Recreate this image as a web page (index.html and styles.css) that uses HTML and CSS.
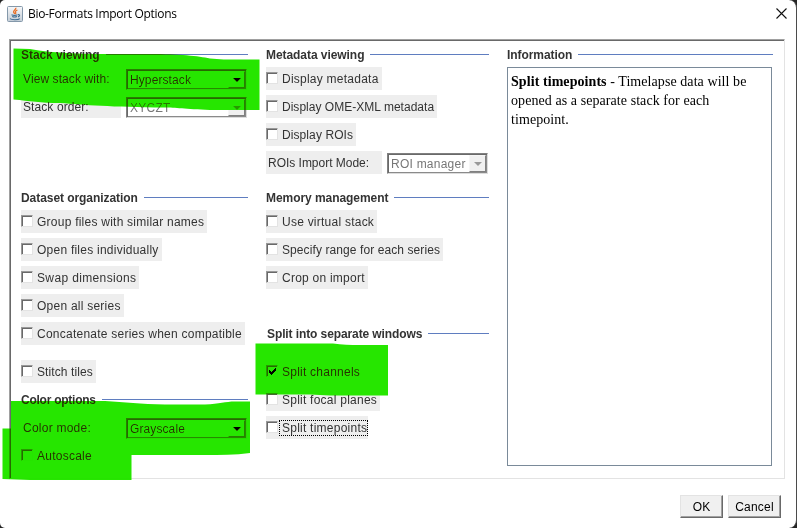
FILE: index.html
```html
<!DOCTYPE html>
<html lang="en">
<head>
<meta charset="utf-8">
<title>Bio-Formats Import Options</title>
<link rel="stylesheet" href="styles.css">
</head>
<body>
<div class="window">
  <header class="titlebar">
    <svg class="java" viewBox="0 0 16 16" width="16" height="16">
      <defs><linearGradient id="tile" x2="0" y2="1"><stop offset="0" stop-color="#f7f8fa"/><stop offset="1" stop-color="#c3cdd6"/></linearGradient></defs>
      <rect x=".5" y=".5" width="15" height="15" rx="1" fill="url(#tile)" stroke="#8498aa"/>
      <path d="M8.8 1.8c.7 1.8-2.7 2.5-2.2 4.2.2.8 1 1.2 1 2M10.4 4.2c-1.500.5-2.400 1.200-1.800 2.100.5.8.1 1.300-.3 1.700" fill="none" stroke="#e8722a" stroke-width="1.300"/>
      <path d="M4.500 8.800c1.500.6 4.500.6 6 0M5.200 10.500c1.200.5 3.500.5 4.800 0M11 8.700c2-.6 2.300 1.500 0 2.200M3 12.700c1.500 1.400 8.500 1.300 9.800-.1" fill="none" stroke="#3f6c90" stroke-width="1.100"/>
    </svg>
    <h1>Bio-Formats Import Options</h1>
    <svg class="close" viewBox="0 0 11 11" width="11" height="11"><path d="M.5.5l10 10M10.500.5l-10 10" stroke="#111" stroke-width="1.100"/></svg>
  </header>

  <main class="pane">
    <div class="column">
      <section class="stack">
        <h2><span>Stack viewing</span></h2>
        <div class="row"><span class="label snug">View stack with:</span><span class="combo"><span class="value">Hyperstack</span><i class="arrow"></i></span></div>
        <div class="row"><span class="label snug">Stack order:</span><span class="combo disabled"><span class="value">XYCZT</span><i class="arrow"></i></span></div>
      </section>
      <section>
        <h2><span>Dataset organization</span></h2>
        <label class="check"><i class="box"></i><span class="t">Group files with similar names</span></label>
        <label class="check"><i class="box"></i><span class="t">Open files individually</span></label>
        <label class="check loose"><i class="box"></i><span class="t">Swap dimensions</span></label>
        <label class="check"><i class="box"></i><span class="t">Open all series</span></label>
        <label class="check"><i class="box"></i><span class="t">Concatenate series when compatible</span></label>
        <label class="check stitch snug"><i class="box"></i><span class="t">Stitch tiles</span></label>
      </section>
      <section class="color">
        <h2><span>Color options</span></h2>
        <div class="row"><span class="label">Color mode:</span><span class="combo"><span class="value">Grayscale</span><i class="arrow"></i></span></div>
        <label class="check"><i class="box"></i><span class="t">Autoscale</span></label>
      </section>
    </div>

    <div class="column">
      <section class="stack">
        <h2><span>Metadata viewing</span></h2>
        <label class="check"><i class="box"></i><span class="t">Display metadata</span></label>
        <label class="check ome"><i class="box"></i><span class="t">Display OME-XML metadata</span></label>
        <label class="check snug"><i class="box"></i><span class="t">Display ROIs</span></label>
        <div class="row roi"><span class="label">ROIs Import Mode:</span><span class="combo disabled"><span class="value">ROI manager</span><i class="arrow"></i></span></div>
      </section>
      <section class="memory">
        <h2><span>Memory management</span></h2>
        <label class="check"><i class="box"></i><span class="t">Use virtual stack</span></label>
        <label class="check snug"><i class="box"></i><span class="t">Specify range for each series</span></label>
        <label class="check"><i class="box"></i><span class="t">Crop on import</span></label>
      </section>
      <section class="split">
        <h2><span>Split into separate windows</span></h2>
        <label class="check"><i class="box"><svg viewBox="0 0 7 7" width="7" height="7" shape-rendering="crispEdges"><path d="M0 2h1v1h1v1h1v-1h1v-1h1v-1h1v-1h1v3h-1v1h-1v1h-1v1h-1v1h-1v-1h-1v-1h-1z"/></svg></i><span class="t">Split channels</span></label>
        <label class="check"><i class="box"></i><span class="t">Split focal planes</span></label>
        <label class="check focus"><i class="box"></i><span class="t">Split timepoints</span></label>
      </section>
    </div>

    <div class="column">
      <section class="info">
        <h2><span>Information</span></h2>
        <div class="text"><p><b>Split timepoints</b> - Timelapse data will be<br>opened as a separate stack for each<br>timepoint.</p></div>
      </section>
    </div>
  </main>

  <footer class="buttons"><button class="ok">OK</button><button>Cancel</button></footer>

  <svg class="marker" viewBox="0 0 797 528" width="797" height="528">
    <path d="M13.500 48.500L30 49C60 55 110 54 150 54C180 54 198 56 210 58.500C225 60 240 59.500 259.500 59.500V110H210C185 109 175 107.500 165 107.500C110 107 85 105 60 103C40 103 30 101 13.500 99.500Z"/>
    <path d="M11 401H105C125 402 140 404 165 404.500H205C220 404 225 401.500 235 401.500H250V453C235 455 220 455 205 455H131.500V480H30L2.500 479V428.500H11Z"/>
    <path d="M255.500 343.500H333C342 344.500 350 345 360 345H388V395.500H330L310 394.500H255.500Z"/>
  </svg>
</div>
</body>
</html>
```
FILE: styles.css
```css
* { box-sizing: border-box; }
body { margin: 0; background: #252525; }
.window {
  position: relative;
  width: 797px;
  height: 528px;
  background: #fff;
  border-right: 1px solid #4b4b4b;
  border-radius: 5px 8px 8px 5px;
  overflow: hidden;
  font: 12px/16px "Liberation Sans", Arial, sans-serif;
  letter-spacing: .24px;
  color: #333;
}
.titlebar { display: flex; align-items: center; height: 39px; padding: 0 9px 12px 7px; }
.titlebar h1 {
  flex: 1;
  margin: 0 0 0 5px;
  font: 12px/16px "Open Sans", "Noto Sans", sans-serif;
  letter-spacing: -.31px;
  color: #000;
}
svg { display: block; }
.pane {
  display: grid;
  grid-template-columns: 227px 223px 266px;
  column-gap: 18px;
  width: 776px;
  height: 440px;
  margin-left: 9px;
  padding: 6px 0 0 11px;
  border: 1px solid;
  border-color: #a0a0a0 #e3e3e3 #e3e3e3 #a0a0a0;
  box-shadow: inset 1px 1px #696969;
}
section { display: flex; flex-direction: column; align-items: flex-start; gap: 5px; }
.stack { height: 143px; }
.memory { height: 136px; }
h2 { display: flex; align-items: center; align-self: stretch; gap: 6px; height: 16px; margin: 0; font-size: 12px; line-height: 16px; letter-spacing: -.06px; }
h2 span { padding-top: 2px; }
h2::after { content: ""; flex: 1; height: 1px; background: #5f7dc0; }
.row { display: flex; width: 100%; height: 23px; }
.label { flex: none; width: 100px; height: 23px; padding: 4px 0 0 2px; background: #eee; white-space: nowrap; }
.combo {
  display: flex;
  flex: none;
  width: 121px;
  height: 21px;
  margin: 2px 0 0 5px;
  padding-left: 2px;
  border: 1px solid;
  border-color: #808080 #dcdcdc #dcdcdc #808080;
  box-shadow: inset 1px 1px #696969, inset -1px -1px #8a8a8a;
  white-space: nowrap;
}
.value { flex: 1; padding: 2px 0 0 1px; letter-spacing: .1px; }
.arrow { width: 17px; margin: 1px; background: #f0f0f0; border: 1px solid; border-color: #f6f6f6 #808080 #808080 #f6f6f6; display: flex; align-items: center; justify-content: center; }
.arrow::after { content: ""; border: 4px solid transparent; border-top-color: #000; border-bottom: 0; }
.disabled { color: #777; }
.disabled .value { letter-spacing: .24px; }
.disabled .arrow::after { border-top-color: #999; }
.roi .label { width: 116px; letter-spacing: -.02px; }
.roi .combo { width: 101px; }
.check { display: flex; align-items: center; height: 23px; padding-right: 3px; background: #eee; white-space: nowrap; }
.snug { letter-spacing: .09px; }
.ome { letter-spacing: .02px; }
.loose { letter-spacing: .36px; }
.box {
  width: 12px;
  height: 12px;
  margin-right: 4px;
  margin-top: -1px;
  padding: 2px 0 0 2px;
  background: #fff;
  border: 1px solid;
  border-color: #999 #e3e3e3 #e3e3e3 #999;
  box-shadow: inset 1px 1px #696969;
}
.stitch { margin-top: 10px; }
.color { margin-top: 8px; }
.color h2 { margin-bottom: 4px; letter-spacing: -.25px; }
.split h2 { margin-bottom: 14px; padding-left: 1px; letter-spacing: -.1px; }
.focus .t { height: 14px; margin: 1px -2px 0; padding-left: 2px; line-height: 14px; outline: 1px dotted #000; }
.text { align-self: stretch; width: 265px; height: 399px; border: 1px solid #7a8a99; padding: 4px 3px; }
.text p { margin: 0; font: 14px/19px "Liberation Serif", "Times New Roman", serif; letter-spacing: .07px; color: #000; white-space: nowrap; }
.buttons { display: flex; justify-content: flex-end; gap: 5px; padding: 16px 15px 0 0; }
button { width: 53px; height: 23px; padding: 0; font: 12px "Liberation Sans", sans-serif; letter-spacing: .2px; background: #f0f0f0; color: #000; border: 1px solid; border-color: #e3e3e3 #696969 #696969 #e3e3e3; box-shadow: inset -1px -1px #a0a0a0; }
.ok { width: 43px; }
.marker { position: absolute; left: 0; top: 0; mix-blend-mode: darken; fill: #26e600; pointer-events: none; }
```
